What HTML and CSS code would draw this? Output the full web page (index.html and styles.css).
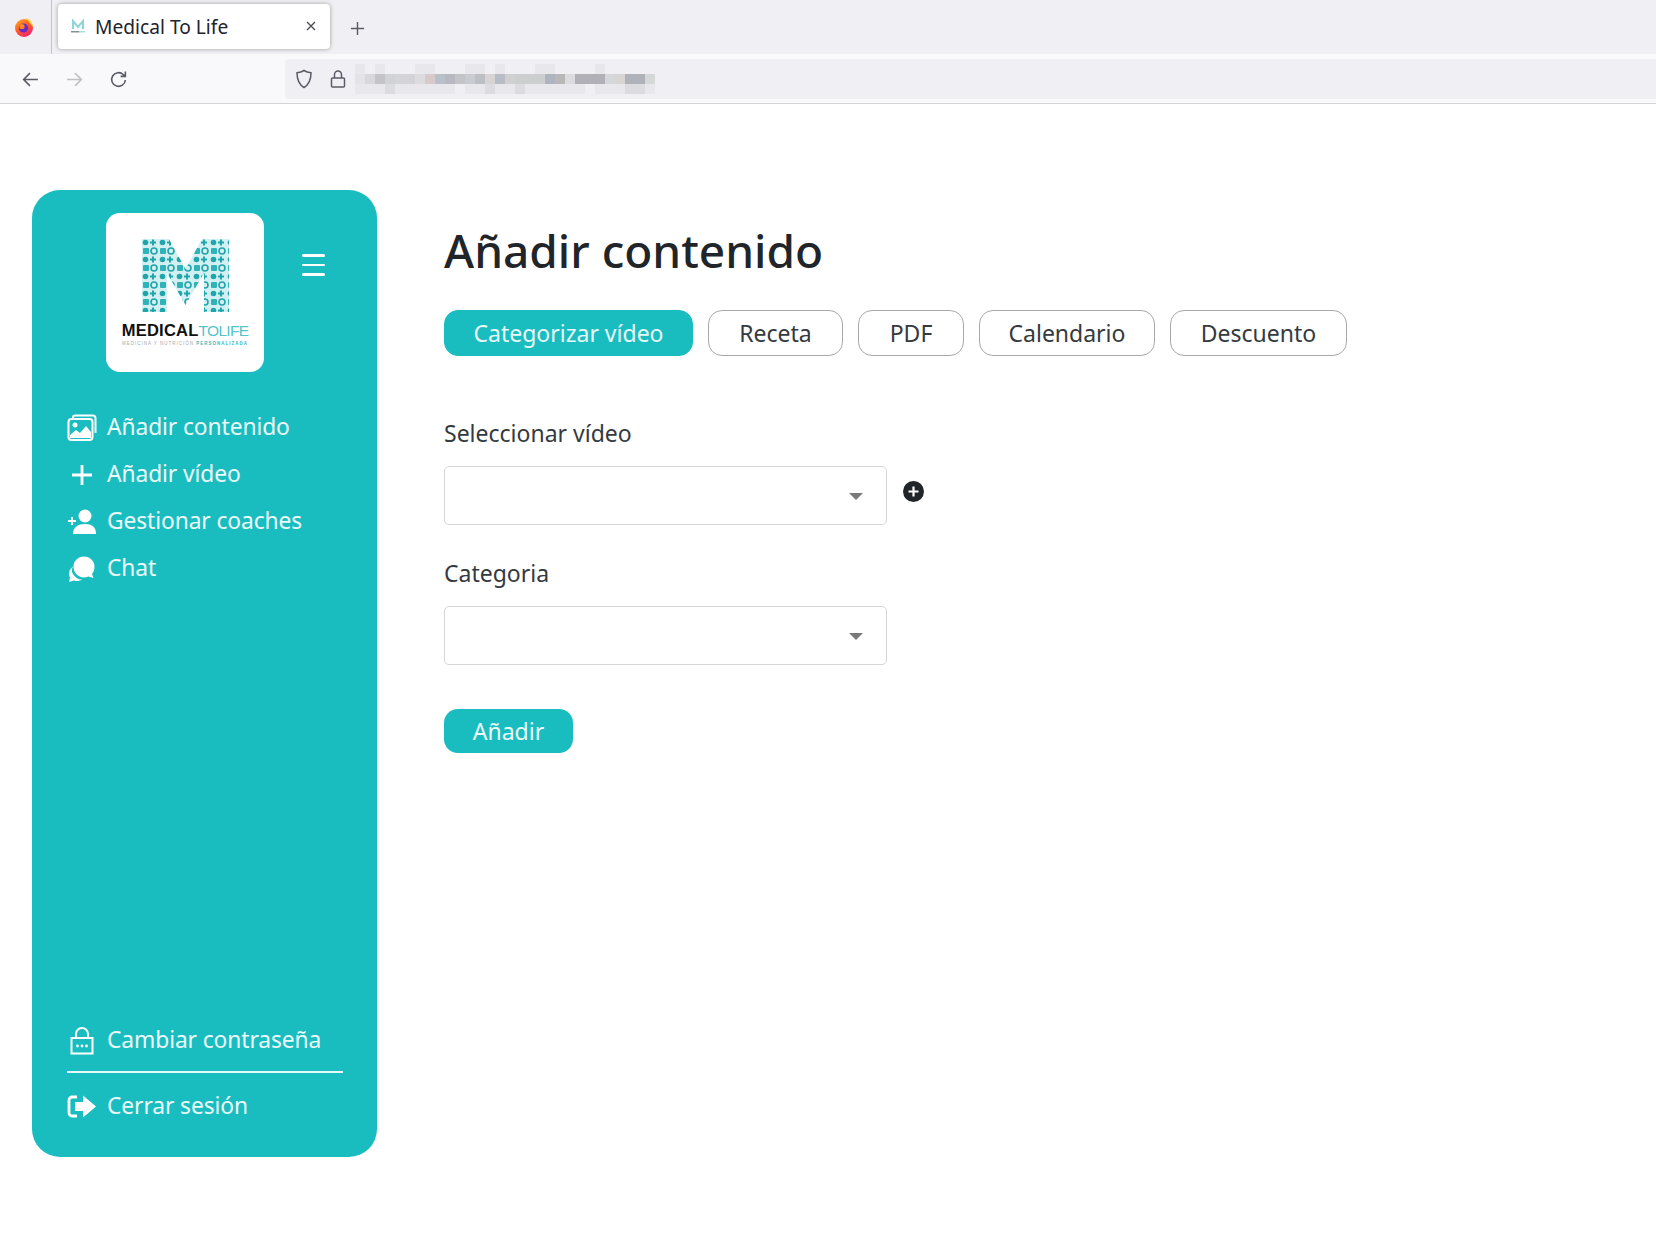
FILE: index.html
```html
<!DOCTYPE html>
<html lang="es">
<head>
  <meta charset="UTF-8">
  <meta name="viewport" content="width=device-width, initial-scale=1.0">
  <title>Medical To Life</title>
  <link rel="stylesheet" href="styles.css">
</head>
<body>
  <header class="browser">
    <div class="tabbar">
      <div class="fx-box">
        <svg class="fx-icon" viewBox="0 0 20 20">
          <defs>
            <linearGradient id="fxGrad" x1="0" y1="0" x2="0.6" y2="1">
              <stop offset="0" stop-color="#ffb21f"/>
              <stop offset="0.55" stop-color="#ff5a2b"/>
              <stop offset="1" stop-color="#f0286a"/>
            </linearGradient>
          </defs>
          <circle cx="10" cy="11" r="9" fill="url(#fxGrad)"/>
          <path d="M12 1c4 1 7 5 7 9-2-2-4-5-7-9z" fill="#ffd12a"/>
          <circle cx="9.5" cy="11" r="4.6" fill="#6a2bc4"/>
          <circle cx="8" cy="9.5" r="2.6" fill="#ff8a24"/>
        </svg>
      </div>
      <div class="tab">
        <svg class="tab-favicon" viewBox="0 0 16 16">
          <path d="M3 11V3l5 6 5-6v8" fill="none" stroke="#8fd5d6" stroke-width="2"/>
          <rect x="1" y="13" width="8" height="1.5" fill="#8a8f96"/>
          <rect x="9" y="13" width="6" height="1.5" fill="#a5dfe0"/>
        </svg>
        <span class="tab-title">Medical To Life</span>
        <svg class="tab-close" viewBox="0 0 12 12"><path d="M2 2l8 8M10 2l-8 8"/></svg>
      </div>
      <svg class="new-tab" viewBox="0 0 16 16"><path d="M8 1v14M1 8h14"/></svg>
    </div>
    <div class="toolbar">
      <svg class="tool-icon" viewBox="0 0 18 18"><path d="M16 9H2.5M8.500 3l-6 6 6 6"/></svg>
      <svg class="tool-icon disabled" viewBox="0 0 18 18"><path d="M2 9h13.500M9.500 3l6 6-6 6"/></svg>
      <svg class="tool-icon" viewBox="0 0 18 18"><path d="M15.500 9.500a6.500 6.500 0 1 1-2-5.200L15.500 6M15.500 1.500V6H11"/></svg>
      <div class="address">
        <svg class="addr-icon" viewBox="0 0 18 20"><path d="M9 1.500c2 1.300 4.500 2 7 2.200 0 6.500-1.500 11.500-7 14.800C3.500 15.200 2 10.200 2 3.700c2.500-.2 5-.9 7-2.200z"/></svg>
        <svg class="addr-icon" viewBox="0 0 18 20"><path d="M5.500 9V5.500a3.500 3.500 0 0 1 7 0V9M3.500 9h11a1 1 0 0 1 1 1v7a1 1 0 0 1-1 1h-11a1 1 0 0 1-1-1v-7a1 1 0 0 1 1-1z"/></svg>
        <svg class="url-blur" viewBox="0 0 300 30">
          <g fill="#e8e8ec">
            <rect x="0" y="0" width="10" height="10"/><rect x="20" y="0" width="10" height="10"/>
            <rect x="60" y="0" width="20" height="10"/><rect x="110" y="0" width="20" height="10"/>
            <rect x="140" y="0" width="10" height="10"/><rect x="180" y="0" width="20" height="10"/>
            <rect x="240" y="0" width="10" height="10"/>
            <rect x="0" y="20" width="30" height="10"/><rect x="40" y="20" width="60" height="10"/>
            <rect x="110" y="20" width="50" height="10"/><rect x="170" y="20" width="60" height="10"/>
            <rect x="240" y="20" width="60" height="10"/>
          </g>
          <g fill="#dcdce0">
            <rect x="30" y="20" width="10" height="10"/><rect x="130" y="20" width="10" height="10"/>
            <rect x="160" y="20" width="10" height="10"/><rect x="270" y="20" width="20" height="10"/>
          </g>
          <rect x="0" y="10" width="10" height="10" fill="#e4e4e8"/>
          <rect x="10" y="10" width="10" height="10" fill="#d8d8dc"/>
          <rect x="20" y="10" width="10" height="10" fill="#c4c4c8"/>
          <rect x="30" y="10" width="10" height="10" fill="#d0d2d6"/>
          <rect x="40" y="10" width="20" height="10" fill="#d4d4d8"/>
          <rect x="60" y="10" width="10" height="10" fill="#dcdce0"/>
          <rect x="70" y="10" width="10" height="10" fill="#d6caca"/>
          <rect x="80" y="10" width="10" height="10" fill="#b8c0ca"/>
          <rect x="90" y="10" width="10" height="10" fill="#b8b8c0"/>
          <rect x="100" y="10" width="10" height="10" fill="#c4c4c8"/>
          <rect x="110" y="10" width="10" height="10" fill="#c8ccd0"/>
          <rect x="120" y="10" width="10" height="10" fill="#bcc0c4"/>
          <rect x="130" y="10" width="10" height="10" fill="#d8d4d6"/>
          <rect x="140" y="10" width="10" height="10" fill="#b8bcc4"/>
          <rect x="150" y="10" width="10" height="10" fill="#d0d0d0"/>
          <rect x="160" y="10" width="30" height="10" fill="#ccced0"/>
          <rect x="190" y="10" width="10" height="10" fill="#aeb4c0"/>
          <rect x="200" y="10" width="10" height="10" fill="#b8b8b8"/>
          <rect x="210" y="10" width="10" height="10" fill="#dcdce0"/>
          <rect x="220" y="10" width="30" height="10" fill="#b0b0b6"/>
          <rect x="250" y="10" width="10" height="10" fill="#d4d8dc"/>
          <rect x="260" y="10" width="10" height="10" fill="#d8d4d4"/>
          <rect x="270" y="10" width="20" height="10" fill="#b0b2ba"/>
          <rect x="290" y="10" width="10" height="10" fill="#d4d8d8"/>
        </svg>
      </div>
    </div>
  </header>

  <div class="app">
    <aside class="sidebar">
      <div class="sidebar-top">
        <div class="logo">
          <svg class="logo-mark" viewBox="0 0 87 73">
            <defs>
              <pattern id="bits" width="17" height="17" patternUnits="userSpaceOnUse">
                <rect width="17" height="17" fill="#d2f0f1"/>
                <circle cx="3.500" cy="3.500" r="2.800" fill="#1fa5ab"/>
                <path d="M11 .5v6M8 3.500h6" stroke="#1fa5ab" stroke-width="2"/>
                <rect x="1" y="9" width="6" height="6" rx="1" fill="#2fb3b8"/>
                <circle cx="12" cy="12" r="3" fill="none" stroke="#1fa5ab" stroke-width="1.600"/>
              </pattern>
            </defs>
            <path d="M0 0H27L43.500 30 60 0H87V73H62V34L43.500 66 25 34V73H0z" fill="url(#bits)"/>
          </svg>
          <div class="logo-name"><b>MEDICAL</b><span>TOLIFE</span></div>
          <div class="logo-tag">MEDICINA Y NUTRICIÓN <b>PERSONALIZADA</b></div>
        </div>
        <div class="burger"><i></i><i></i><i></i></div>
      </div>

      <nav class="nav">
        <a class="nav-item">
          <svg class="nav-icon" viewBox="0 0 30 28">
            <path class="line" d="M6 4.500V3.500A2 2 0 0 1 8 1.500h18a2.500 2.500 0 0 1 2.500 2.500v15"/>
            <rect class="line" x="1.500" y="5" width="24" height="21" rx="3"/>
            <circle class="solid" cx="8" cy="11" r="2.500"/>
            <path class="solid" d="M3 24v-3l6-5 4 3 6-7 5 6v6z"/>
          </svg>
          Añadir contenido
        </a>
        <a class="nav-item">
          <svg class="nav-icon" viewBox="0 0 30 28"><path class="line thick" d="M15 4v20M5 14h20"/></svg>
          Añadir vídeo
        </a>
        <a class="nav-item">
          <svg class="nav-icon" viewBox="0 0 30 28">
            <circle class="solid" cx="18" cy="8" r="6.500"/>
            <path class="solid" d="M6 26c0-7 5-10 12-10s11 3 11 10z"/>
            <path class="line" d="M5 9v8M1 13h8"/>
          </svg>
          Gestionar coaches
        </a>
        <a class="nav-item">
          <svg class="nav-icon" viewBox="0 0 30 28">
            <path class="solid" d="M6 19a7 7 0 0 1 .5-8l-3 3c-2 3-2 6-.5 8.500L2 27l5-1.500c3 1 6 .5 8-1-4 0-7-2-9-5.500z"/>
            <path class="solid" d="M17 1.500c6 0 10.500 4.500 10.500 10 0 3-1 5.500-2.500 7.500l1.500 4-5-1.500c-8 3-15-2-15-10 0-5.500 4.500-10 10.500-10z"/>
          </svg>
          Chat
        </a>
      </nav>

      <div class="nav-bottom">
        <a class="nav-item">
          <svg class="nav-icon" viewBox="0 0 30 28">
            <path class="line" d="M9 11V7a6 6 0 0 1 12 0v4"/>
            <rect class="line" x="4.500" y="11" width="21" height="15.500"/>
            <circle class="solid" cx="10.500" cy="19" r="1.400"/><circle class="solid" cx="15" cy="19" r="1.400"/><circle class="solid" cx="19.500" cy="19" r="1.400"/>
          </svg>
          Cambiar contraseña
        </a>
        <div class="nav-divider"></div>
        <a class="nav-item">
          <svg class="nav-icon" viewBox="0 0 30 28">
            <path class="line thick" d="M10 4H5a3 3 0 0 0-3 3v13a3 3 0 0 0 3 3h5"/>
            <path class="solid" d="M8 9h8V2.500L29 13.500 16 24.500V18H8z"/>
          </svg>
          Cerrar sesión
        </a>
      </div>
    </aside>

    <main class="content">
      <h1>Añadir contenido</h1>
      <div class="tabs">
        <button class="pill pill-video active">Categorizar vídeo</button>
        <button class="pill pill-receta">Receta</button>
        <button class="pill pill-pdf">PDF</button>
        <button class="pill pill-cal">Calendario</button>
        <button class="pill pill-desc">Descuento</button>
      </div>

      <form class="form">
        <label class="field-label">Seleccionar vídeo</label>
        <div class="field-row">
          <div class="select"><span class="caret"></span></div>
          <svg class="add-icon" viewBox="0 0 21 21">
            <circle cx="10.500" cy="10.500" r="10.500" fill="#212529"/>
            <path d="M10.500 5.500v10M5.500 10.500h10" stroke="#fff" stroke-width="2.200"/>
          </svg>
        </div>
        <label class="field-label">Categoria</label>
        <div class="field-row">
          <div class="select"><span class="caret"></span></div>
        </div>
        <button type="button" class="submit">Añadir</button>
      </form>
    </main>
  </div>
</body>
</html>
```

FILE: styles.css
```css
body {
  margin: 0;
  background: #fff;
  color: #212529;
  font-family: "Noto Sans", "Open Sans", sans-serif;
}

/* browser chrome */
.tabbar {
  display: flex;
  align-items: center;
  height: 54px;
  background: #f0f0f4;
}
.fx-box {
  display: flex;
  align-items: center;
  justify-content: center;
  width: 52px;
  height: 54px;
  padding-right: 3px;
  box-sizing: border-box;
  border-right: 1px solid #c4c4c8;
}
.fx-icon {
  width: 20px;
  height: 20px;
}
.tab {
  display: flex;
  align-items: center;
  width: 272px;
  height: 45px;
  margin: 0 0 2px 6px;
  padding: 0 13px 0 12px;
  box-sizing: border-box;
  background: #fff;
  border-radius: 4px;
  box-shadow: 0 0 4px rgba(0, 0, 0, 0.35);
}
.tab-favicon {
  width: 16px;
  height: 16px;
  margin-right: 9px;
}
.tab-title {
  flex: 1;
  font-size: 19.2px;
  color: #23232b;
}
.tab-close {
  width: 12px;
  height: 12px;
  fill: none;
  stroke: #4a4a50;
  stroke-width: 1.300;
}
.new-tab {
  width: 15px;
  height: 15px;
  margin: 2px 0 0 20px;
  fill: none;
  stroke: #5b5b66;
  stroke-width: 1.500;
}
.toolbar {
  display: flex;
  align-items: center;
  height: 50px;
  padding-left: 21px;
  box-sizing: border-box;
  background: #f9f9fb;
  border-bottom: 1px solid #d4d4d8;
}
.tool-icon {
  width: 19px;
  height: 19px;
  margin: 2px 25px 0 0;
  fill: none;
  stroke: #5b5b66;
  stroke-width: 1.500;
}
.tool-icon.disabled {
  stroke: #bfbfc5;
}
.address {
  display: flex;
  flex: 1;
  align-items: center;
  height: 40px;
  margin-left: 132px;
  padding-left: 10px;
  background: #f0f0f4;
  border-radius: 4px 0 0 4px;
}
.addr-icon {
  width: 18px;
  height: 20px;
  margin-right: 16px;
  fill: none;
  stroke: #5b5b66;
  stroke-width: 1.500;
}
.url-blur {
  width: 300px;
  height: 30px;
  margin-left: -8px;
}

/* page */
.app {
  display: flex;
  align-items: flex-start;
  gap: 67px;
  padding: 86px 0 85px 32px;
}
.sidebar {
  display: flex;
  flex-direction: column;
  width: 345px;
  height: 967px;
  box-sizing: border-box;
  padding: 23px 34px 0 35px;
  background: #19bdc0;
  border-radius: 28px;
}
.sidebar-top {
  display: flex;
  align-items: flex-start;
}
.logo {
  width: 158px;
  height: 159px;
  margin-left: 39px;
  padding-top: 26px;
  box-sizing: border-box;
  background: #fff;
  border-radius: 14px;
  text-align: center;
}
.logo-mark {
  display: block;
  width: 87px;
  height: 73px;
  margin: 0 auto;
  filter: blur(0.3px);
}
.logo-name {
  margin-top: 8px;
  font-family: "Liberation Sans", sans-serif;
  font-size: 15.500px;
  line-height: 20px;
  letter-spacing: -0.700px;
  color: #55c4c8;
  white-space: nowrap;
}
.logo-name b {
  color: #111;
  font-weight: 700;
  font-size: 16.500px;
  letter-spacing: 0.250px;
}
.logo-tag {
  font-family: "Liberation Sans", sans-serif;
  font-size: 4.500px;
  letter-spacing: 1px;
  color: #a8a8a8;
  white-space: nowrap;
}
.logo-tag b {
  color: #3cb8bc;
}
.burger {
  display: flex;
  flex-direction: column;
  gap: 7px;
  width: 23px;
  margin: 41px 0 0 38px;
}
.burger i {
  display: block;
  height: 2.500px;
  background: #fff;
  border-radius: 2px;
}

.nav {
  display: flex;
  flex-direction: column;
  margin-top: 31px;
}
.nav-item {
  display: flex;
  align-items: center;
  gap: 10px;
  height: 47px;
  font-size: 22.800px;
  letter-spacing: -0.100px;
  color: #ebfafa;
}
.nav-icon {
  flex: none;
  width: 30px;
  height: 28px;
  margin-top: 3px;
}
.nav-icon .line {
  fill: none;
  stroke: #fff;
  stroke-width: 2;
}
.nav-icon .thick {
  stroke-width: 2.800;
}
.nav-icon .solid {
  fill: #fff;
}
.nav-bottom {
  margin-top: auto;
  padding-bottom: 28px;
}
.nav-divider {
  height: 2px;
  margin: 8px 0 9px;
  background: #e6f8f8;
}

.content {
  flex: 1;
}
h1 {
  margin: 28px 0 0;
  font-size: 46px;
  line-height: 64px;
  font-weight: 500;
}
.tabs {
  display: flex;
  gap: 15px;
  margin-top: 28px;
}
.pill {
  height: 46px;
  padding: 0;
  background: #fff;
  border: 1px solid #a8a8a8;
  border-radius: 14px;
  color: #343a40;
  font: 23px "Noto Sans", sans-serif;
}
.pill-video { width: 249px; }
.pill-receta { width: 135px; }
.pill-pdf { width: 106px; }
.pill-cal { width: 176px; }
.pill-desc { width: 177px; }
.pill.active {
  border-color: #19bdc0;
  background: #19bdc0;
  color: #e8f9f9;
}
.form {
  margin-top: 61px;
}
.field-label {
  display: block;
  height: 33px;
  font-size: 23px;
  line-height: 33px;
  color: #343a40;
}
.field-row {
  display: flex;
  align-items: flex-start;
  margin: 16px 0 32px;
}
.select {
  position: relative;
  width: 443px;
  height: 59px;
  box-sizing: border-box;
  background: #fff;
  border: 1.500px solid #d6d6d6;
  border-radius: 5px;
}
.caret {
  position: absolute;
  top: 26px;
  right: 23px;
  border-top: 7px solid #7a7a7a;
  border-left: 7px solid transparent;
  border-right: 7px solid transparent;
}
.add-icon {
  width: 21px;
  height: 21px;
  margin: 15px 0 0 16px;
}
.submit {
  display: block;
  width: 129px;
  height: 44px;
  margin-top: 44px;
  padding: 0;
  border: 0;
  border-radius: 14px;
  background: #19bdc0;
  color: #eefbfb;
  font: 23px "Noto Sans", sans-serif;
}
```
